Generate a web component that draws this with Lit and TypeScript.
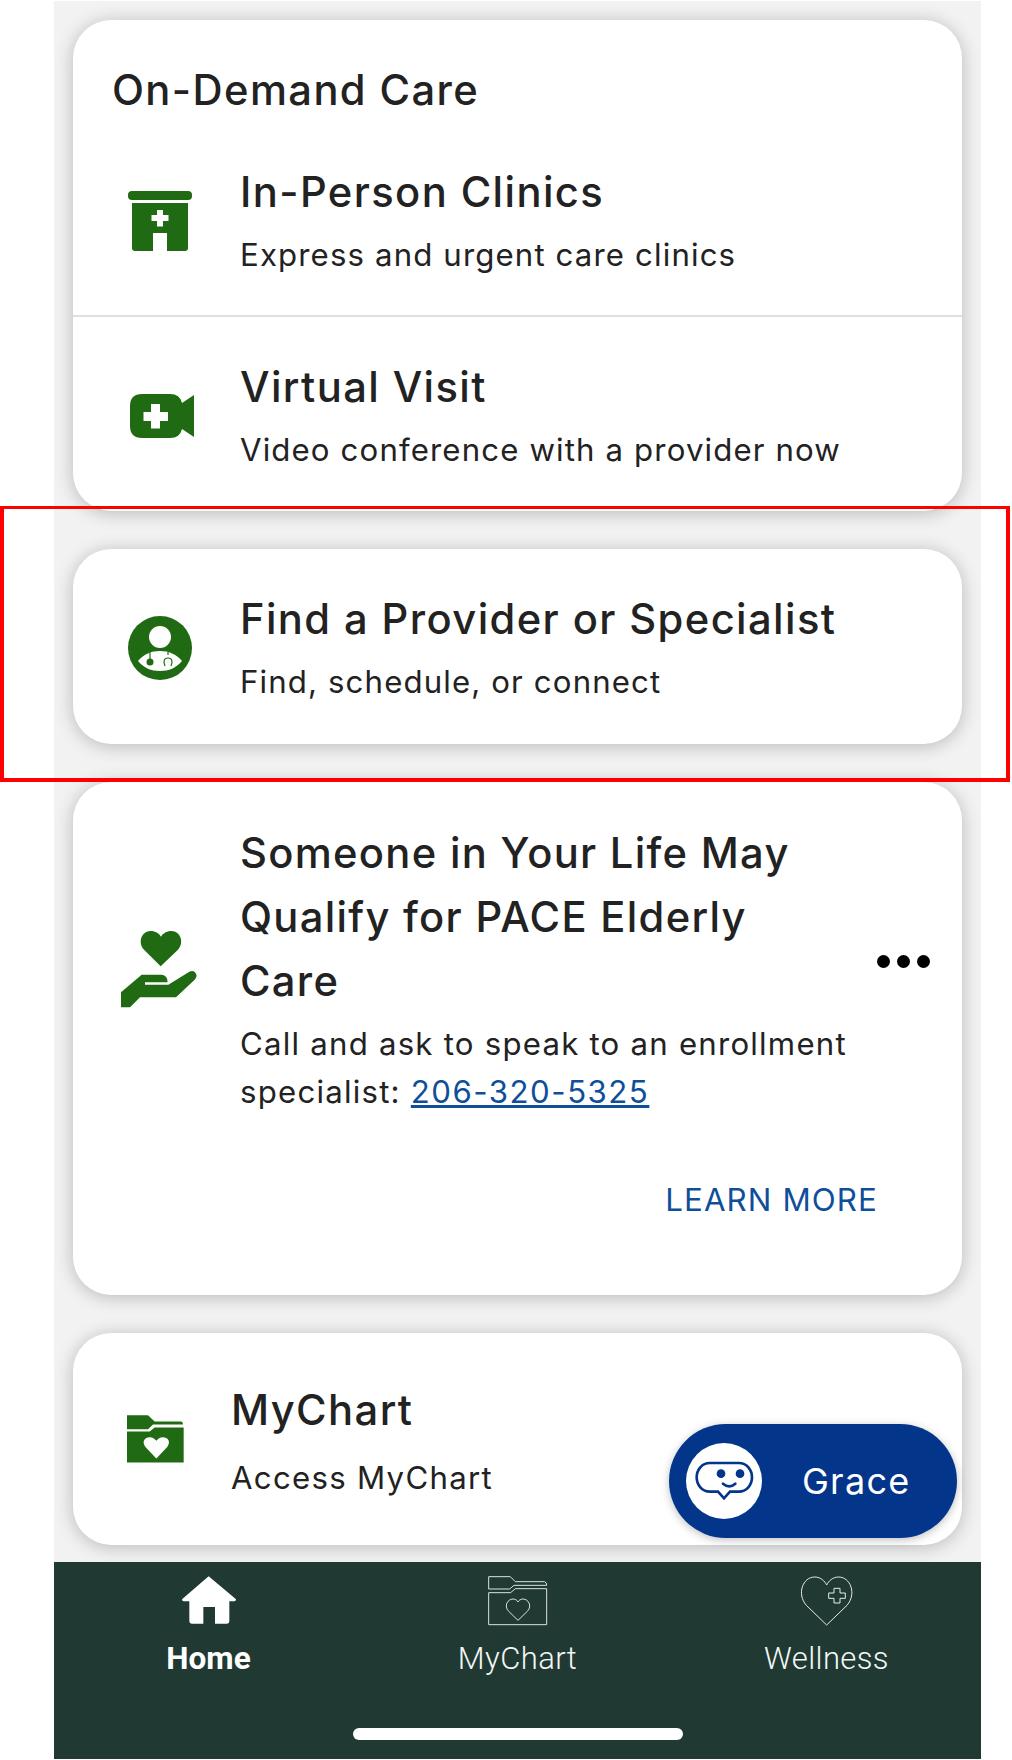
import { LitElement, html, css } from "lit";
import { customElement } from "lit/decorators.js";

const clinic = html`<svg width="64" height="60" viewBox="0 0 64 60"><rect width="64" height="9" rx="4" fill="#1f6a12"/><path fill-rule="evenodd" fill="#1f6a12" d="M4 12H60V57Q60 60 57 60H39V42H25V60H7Q4 60 4 57ZM29 19V24H23.500V30H29V35.500H35V30H40.500V24H35V19Z"/></svg>`;
const video = html`<svg width="68" height="44" viewBox="-4 0 68 44"><path fill-rule="evenodd" fill="#1f6a12" d="M12 0H40Q50 0 52 9L64 1V43L52 35Q50 44 40 44H12Q0 44 0 32V12Q0 0 12 0ZM21 10V18H13.500V27H21V34.500H30V27H38V18H30V10Z"/></svg>`;
const provider = html`<svg width="64" height="64" viewBox="0 0 64 64"><circle cx="32" cy="32" r="32" fill="#1f6a12"/><circle cx="32" cy="21" r="11" fill="#fff"/><path fill="#fff" d="M10 45C16 38 23 35 32 35S48 38 54 45C48 52 41 55 32 55S16 52 10 45Z"/><path d="M22 36V44" stroke="#1f6a12" stroke-width="1.200"/><circle cx="22" cy="46" r="3.500" fill="#1f6a12"/><path d="M40 36V39M37 50C35 45 36 42 40 42S45 45 43 50" stroke="#1f6a12" stroke-width="1.200" fill="none"/></svg>`;
const hand = html`<svg width="80" height="80" viewBox="60 85 240 240"><path fill="#1f6a12" d="M182 197L132 147C112 125 125 91 152 91C166 91 177 98 183 108C189 98 200 91 214 91C241 91 254 125 234 147Z"/><path fill="#1f6a12" d="M63 320V275L125 222H185Q203 224 203 245H135V252H205L268 213Q285 206 290 225Q288 233 284 237L228 290H120L90 320Z"/></svg>`;
const folder = html`<svg width="57" height="48" viewBox="82 76 171 143"><path fill="#1f6a12" d="M82 76H145L165 95H245Q250 97 250 104H160L145 118H82Z"/><path fill="#1f6a12" d="M82 125H150L165 113H252V218H82Z"/><path fill="#fff" d="M170 206L138 172C125 155 135 142 150 142C160 142 167 148 170 153C173 148 180 142 190 142C205 142 215 155 202 172Z"/></svg>`;
const home = html`<svg class="house" width="54" height="48" viewBox="153 52 162 144"><path fill="#fff" d="M233 53L315 122Q315 128 310 128H295V188Q295 195 288 195H252V145H217V195H182Q175 195 175 188V128H158Q153 128 153 122Z"/></svg>`;
const chart = html`<svg width="60" height="50" viewBox="170 49 180 150"><g fill="none" stroke="#d8e2de" stroke-width="3"><path d="M172 51H237L252 66H340Q346 68 346 77H248L235 88H172Z"/><path d="M172 99H238L252 87H346V195H172Z"/><path d="M260 182L232 155C216 138 230 118 245 118C252 118 258 122 260 127C262 122 268 118 275 118C290 118 304 138 288 155Z"/></g></svg>`;
const wellness = html`<svg width="56" height="50" viewBox="1104 47 166 150"><g fill="none" stroke="#e4ebe8" stroke-width="3"><path d="M1186 194L1125 135C1095 100 1115 50 1150 50C1168 50 1180 62 1186 74C1192 62 1204 50 1222 50C1257 50 1277 100 1247 135Z"/><path d="M1208 84H1226V98H1242V114H1226V128H1208V114H1192V98H1208Z"/></g></svg>`;
const grace = html`<svg width="76" height="76" viewBox="108 130 228 228"><circle cx="222" cy="244" r="114" fill="#fff"/><path fill="none" stroke="#03358a" stroke-width="8" d="M180 190H266C292 190 306 212 306 233C306 256 290 276 266 276H240L222 296L204 276H180C156 276 140 256 140 233C140 212 154 190 180 190Z"/><circle cx="213" cy="222" r="13" fill="#03358a"/><circle cx="270" cy="222" r="13" fill="#03358a"/><path d="M219 252Q238 268 256 252" fill="none" stroke="#03358a" stroke-width="8" stroke-linecap="round"/></svg>`;

@customElement("app-root")
export class AppRoot extends LitElement {
  static styles = css`
    :host { display: block; position: relative; width: 1012px; height: 1760px; background: #fff; font-family: Inter, "Liberation Sans", sans-serif; color: #222; overflow: hidden; }
    .phone { box-sizing: border-box; width: 927px; height: 1758px; margin: 1px 0 0 54px; background: #f2f2f2; position: relative; overflow: hidden; display: flex; flex-direction: column; }
    .scroll { flex: 1; min-height: 0; padding: 19px 19px 0; display: flex; flex-direction: column; }
    .card { background: #fff; border-radius: 38px; box-shadow: 0 2px 18px rgba(0,0,0,.24); flex: none; }
    .card + .card { margin-top: 38px; }
    .heading { font-size: 41.700px; font-weight: 500; line-height: 50px; letter-spacing: 1.400px; padding: 45px 0 0 39px; margin: 0; }
    .row { display: flex; align-items: center; }
    .icon { flex: none; width: 98px; margin: 0 31px 4px 38px; display: flex; justify-content: center; }
    .title { font-size: 41.700px; font-weight: 500; line-height: 50px; letter-spacing: 1.400px; }
    .sub { font-size: 31.200px; line-height: 48px; margin-top: 14px; letter-spacing: 1.130px; white-space: nowrap; }
    .r1 { padding: 52px 0 36px; border-bottom: 2px solid #dedede; }
    .r2 { padding: 45px 0 37px; }
    .r3 { padding: 45px 0 38px; }
    .promo { height: 513px; box-sizing: border-box; padding-top: 39px; display: flex; flex-direction: column; }
    .promo .icon { margin-bottom: 0; }
    .promo .text { width: 612px; }
    .promo .title { line-height: 64px; letter-spacing: 1.300px; }
    .promo .sub { margin-top: 7px; white-space: normal; letter-spacing: 1.220px; }
    a { color: #0f4f99; text-decoration: underline; letter-spacing: 1.500px; }
    .dots { display: flex; gap: 7px; position: absolute; left: 823px; top: 954px; }
    .dots i { width: 13px; height: 13px; border-radius: 50%; background: #000; }
    .more { align-self: flex-end; margin: 66px 84px 0 0; font-size: 31.300px; line-height: 36px; letter-spacing: 1.100px; color: #0f4f99; }
    .mychart { height: 212px; box-sizing: border-box; padding: 8px 0 0 54px; display: flex; align-items: center; gap: 47px; }
    .mychart .sub { margin-top: 19px; letter-spacing: 1.280px; }
    .mychart svg { margin-bottom: 8px; }
    .tabs { flex: none; height: 197px; background: #203a33; display: grid; grid-template-columns: repeat(3, 1fr); position: relative; color: #f4f7f6; margin-top: 18px; }
    .tab { display: flex; flex-direction: column; align-items: center; font-family: Roboto, sans-serif; font-size: 31px; font-weight: 300; line-height: 40px; letter-spacing: .4px; padding-top: 14px; }
    .tab .ic { height: 50px; margin-bottom: 13px; display: flex; align-items: flex-end; }
    .tab .house { margin-bottom: 2px; }
    .tab.on { font-weight: 700; color: #fff; font-size: 31.500px; letter-spacing: 0; }
    .bar { position: absolute; left: 299px; top: 166px; width: 330px; height: 12px; border-radius: 6px; background: #fff; }
    .grace { position: absolute; left: 615px; top: 1423px; width: 288px; height: 114px; border-radius: 57px; background: #03358a; box-shadow: 0 2px 8px rgba(0,0,0,.25); color: #fff; display: flex; align-items: center; box-sizing: border-box; padding-left: 17px; gap: 40px; font-size: 36px; letter-spacing: 1.250px; }
    .grace svg { flex: none; }
    .mark { position: absolute; left: 0; top: 506px; width: 1010px; height: 276px; box-sizing: border-box; border: 4px solid #f00; border-top-width: 3px; pointer-events: none; }
  `;
  render() {
    return html`
      <div class="phone">
        <div class="scroll">
          <section class="card">
            <h2 class="heading">On-Demand Care</h2>
            <div class="row r1"><div class="icon">${clinic}</div><div><div class="title">In-Person Clinics</div><div class="sub">Express and urgent care clinics</div></div></div>
            <div class="row r2"><div class="icon">${video}</div><div><div class="title">Virtual Visit</div><div class="sub">Video conference with a provider now</div></div></div>
          </section>
          <section class="card"><div class="row r3"><div class="icon">${provider}</div><div><div class="title">Find a Provider or Specialist</div><div class="sub">Find, schedule, or connect</div></div></div></section>
          <section class="card promo">
            <div class="row"><div class="icon">${hand}</div><div class="text"><div class="title">Someone in Your Life May Qualify for PACE Elderly Care</div><div class="sub">Call and ask to speak to an enrollment specialist: <a href="#">206-320-5325</a></div></div></div>
            <div class="more">LEARN MORE</div>
            <div class="dots"><i></i><i></i><i></i></div>
          </section>
          <section class="card mychart">${folder}<div><div class="title">MyChart</div><div class="sub">Access MyChart</div></div></section>
        </div>
        <nav class="tabs">
          <div class="tab on"><div class="ic">${home}</div>Home</div>
          <div class="tab"><div class="ic">${chart}</div>MyChart</div>
          <div class="tab"><div class="ic">${wellness}</div>Wellness</div>
          <div class="bar"></div>
        </nav>
        <div class="grace">${grace}<span>Grace</span></div>
      </div>
      <div class="mark"></div>
    `;
  }
}
